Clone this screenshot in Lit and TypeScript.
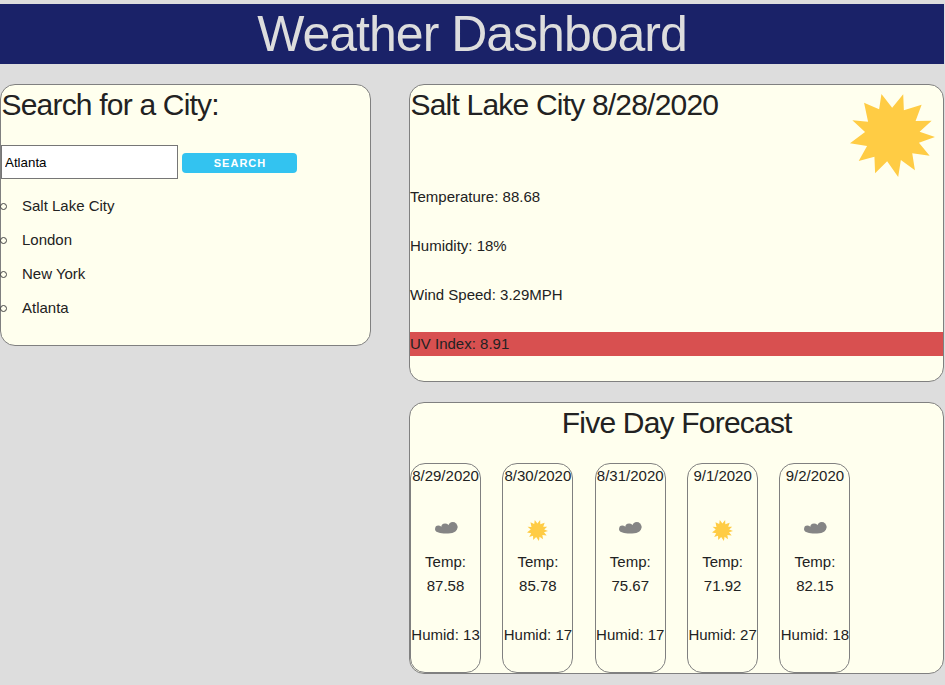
import { LitElement, html, css } from "lit";
import { customElement, property } from "lit/decorators.js";

type Sky = "sun" | "cloud";

interface Day {
  date: string;
  sky: Sky;
  temp: string;
  humid: number;
}

const cities = ["Salt Lake City", "London", "New York", "Atlanta"];

const days: Day[] = [
  { date: "8/29/2020", sky: "cloud", temp: "87.58", humid: 13 },
  { date: "8/30/2020", sky: "sun", temp: "85.78", humid: 17 },
  { date: "8/31/2020", sky: "cloud", temp: "75.67", humid: 17 },
  { date: "9/1/2020", sky: "sun", temp: "71.92", humid: 27 },
  { date: "9/2/2020", sky: "cloud", temp: "82.15", humid: 18 },
];

@customElement("sky-icon")
export class SkyIcon extends LitElement {
  @property() kind: Sky = "sun";

  static styles = css`
    :host { display: block; }
    svg { display: block; width: 100%; height: 100%; overflow: visible; }
    .sun { fill: #ffcc44; }
    .cloud { fill: #858585; }
  `;

  render() {
    return this.kind === "sun"
      ? html`<svg viewBox="62 72 254 249" preserveAspectRatio="none">
          <polygon class="sun" points="156,72 188,113 221,73 223,121 276,104 258,153 306,152 270,185 316,201 268,218 300,257 248,250 256,301 214,270 206,321 173,274 137,310 135,260 88,273 113,228 62,220 107,186 69,151 116,155 104,98 149,118"></polygon>
        </svg>`
      : html`<svg viewBox="0 0 67 34" preserveAspectRatio="none">
          <g class="cloud">
            <circle cx="10" cy="20" r="9.5"></circle>
            <circle cx="30" cy="16" r="11.5"></circle>
            <circle cx="53" cy="14" r="14"></circle>
            <path d="M0.5 20C1 31 16 34 32 34C52 34 66 31 67 14L53 6L30 12L10 16Z"></path>
          </g>
        </svg>`;
  }
}

@customElement("app-root")
export class AppRoot extends LitElement {
  static styles = css`
    :host {
      display: block;
      box-sizing: border-box;
      height: 685px;
      padding: 4px 1px 0 0;
      overflow: hidden;
      background: #dddddd;
      color: #222;
      font: 400 15px/24px "Liberation Sans", Arial, sans-serif;
    }
    *, *::before { box-sizing: border-box; }
    h1, h4, p, ul { margin: 0; padding: 0; font-weight: 300; }
    h1 {
      height: 60px;
      background: #1a2268;
      color: #dddddd;
      font-size: 50px;
      line-height: 60px;
      letter-spacing: -1px;
      text-align: center;
    }
    h4 {
      margin-bottom: 20px;
      font-size: 30px;
      line-height: 40px;
      letter-spacing: -0.8px;
      text-indent: 0.5px;
    }
    .columns {
      display: grid;
      grid-template-columns: 371px 535px;
      justify-content: space-between;
      align-items: start;
      margin-top: 20px;
    }
    .card {
      border: 1px solid #808080;
      border-radius: 15px;
      background: #ffffee;
    }
    .search { height: 262px; }
    .form { display: flex; align-items: center; gap: 4px; height: 34px; margin-bottom: 15px; }
    input {
      width: 177px;
      height: 34px;
      margin: 0;
      padding: 0 3px;
      border: 1px solid #767676;
      border-radius: 0;
      background: #fff;
      color: #000;
      font: 13.333px "Liberation Sans", Arial, sans-serif;
    }
    button {
      width: 115px;
      height: 20px;
      margin-top: 2px;
      padding: 0 0 0 1px;
      border: 0;
      border-radius: 4px;
      background: #33c3f0;
      color: #fff;
      font: 600 11px/20px "Liberation Sans", Arial, sans-serif;
      letter-spacing: 1px;
      text-transform: uppercase;
    }
    ul { list-style: none; }
    li { display: flex; align-items: center; gap: 15px; height: 24px; margin-bottom: 10px; }
    li::before {
      content: "";
      width: 7px;
      height: 7px;
      margin: 1px 0 0 -1px;
      border: 1.3px solid #444;
      border-radius: 50%;
    }
    .right { display: grid; gap: 20px; }
    .current { height: 298px; }
    .top { display: flex; justify-content: space-between; height: 100px; }
    .top sky-icon { width: 85px; height: 83px; margin: 9px 8px 0 0; }
    .current p { margin-bottom: 25px; }
    .current .uv { background: #d85050; }
    .forecast { height: 272px; }
    .forecast h4 { text-align: center; }
    .days { display: flex; gap: 21.25px; }
    .day {
      width: 71.1px;
      height: 210px;
      border: 1px solid #808080;
      border-radius: 15px;
      text-align: center;
    }
    .date, .humid { white-space: nowrap; display: flex; justify-content: center; }
    .sky { display: flex; justify-content: center; height: 62px; padding-top: 32px; }
    .sky sky-icon { width: 21px; height: 21px; }
    .sky sky-icon.cloud { width: 22.5px; height: 11.5px; margin: 1.5px 0 0 1px; }
    .temp { height: 48px; margin-bottom: 25px; }
  `;

  render() {
    return html`
      <h1>Weather Dashboard</h1>
      <div class="columns">
        <section class="card search">
          <h4>Search for a City:</h4>
          <div class="form">
            <input type="text" value="Atlanta" />
            <button>Search</button>
          </div>
          <ul>${cities.map((city) => html`<li>${city}</li>`)}</ul>
        </section>
        <div class="right">
          <section class="card current">
            <div class="top">
              <h4>Salt Lake City 8/28/2020</h4>
              <sky-icon kind="sun"></sky-icon>
            </div>
            <p>Temperature: 88.68</p>
            <p>Humidity: 18%</p>
            <p>Wind Speed: 3.29MPH</p>
            <p class="uv">UV Index: 8.91</p>
          </section>
          <section class="card forecast">
            <h4>Five Day Forecast</h4>
            <div class="days">
              ${days.map(
                (d) => html`<div class="day">
                  <p class="date">${d.date}</p>
                  <div class="sky"><sky-icon class=${d.sky} kind=${d.sky}></sky-icon></div>
                  <p class="temp">Temp:<br />${d.temp}</p>
                  <p class="humid">Humid: ${d.humid}</p>
                </div>`
              )}
            </div>
          </section>
        </div>
      </div>
    `;
  }
}
